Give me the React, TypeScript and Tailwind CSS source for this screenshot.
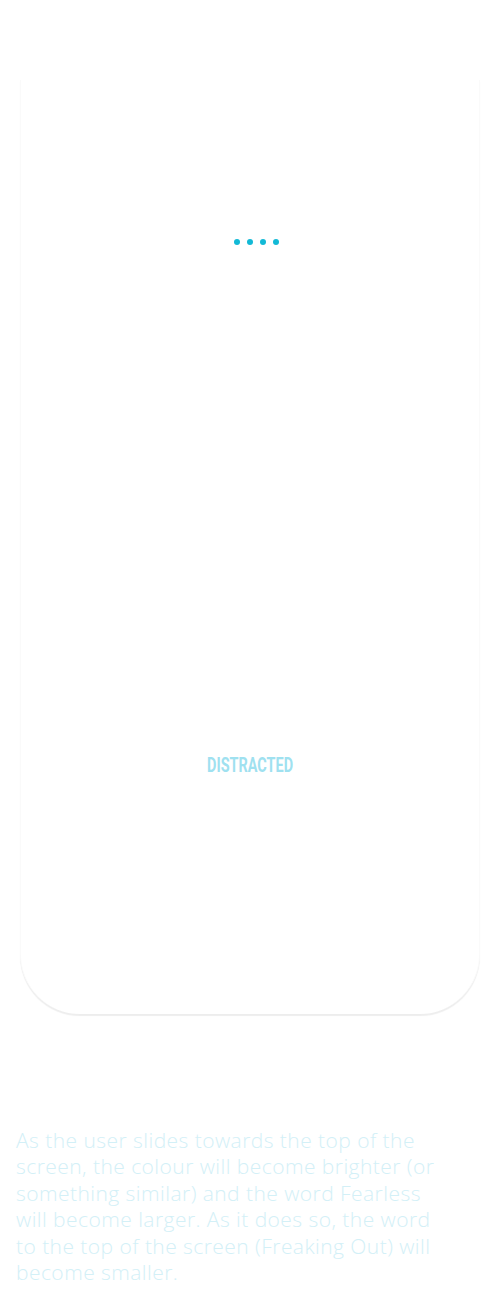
import React from "react";

export default function App() {
  return (
    <div className="w-[500px] h-[1300px] bg-white overflow-hidden" style={{ fontFamily: "'Open Sans', 'Noto Sans', sans-serif" }}>
      <div className="pt-[80px] px-[20px]">
        <div className="h-[934px] bg-white rounded-b-[60px] border-l border-r border-[#fafafa] shadow-[0_2px_1px_rgba(0,0,0,0.07)] flex flex-col items-center">
          <div className="mt-[159px] ml-[12px] flex gap-[7px]">
            <span className="w-[6px] h-[6px] rounded-full bg-[#12b9d6]" />
            <span className="w-[6px] h-[6px] rounded-full bg-[#12b9d6]" />
            <span className="w-[6px] h-[6px] rounded-full bg-[#12b9d6]" />
            <span className="w-[6px] h-[6px] rounded-full bg-[#12b9d6]" />
          </div>
          <div
            className="mt-[510px] text-[19.5px] font-bold text-[#9fe1f0] leading-[22px] scale-x-[0.74]"
            style={{ fontFamily: "Roboto, sans-serif" }}
          >
            DISTRACTED
          </div>
        </div>
      </div>
      <p className="mt-[113px] px-[16px] w-[472px] text-[21px] font-light tracking-[0.45px] leading-[26.4px] text-[#d3f0f7]">
        As the user slides towards the top of the screen, the colour will become brighter (or something similar) and the word Fearless will become larger. As it does so, the word to the top of the screen (Freaking Out) will become smaller.
      </p>
    </div>
  );
}
